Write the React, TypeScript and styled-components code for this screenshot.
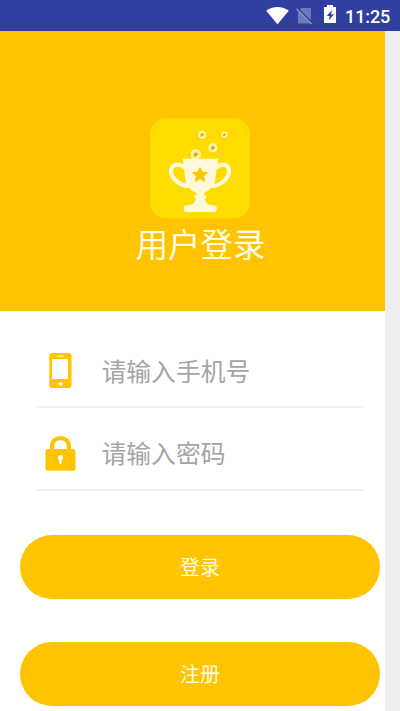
import React from "react";
import styled, { createGlobalStyle } from "styled-components";

const GlobalStyle = createGlobalStyle`
  * { box-sizing: border-box; }
  body {
    margin: 0;
    background: #ededed;
    font-family: Roboto, "Noto Sans CJK SC", sans-serif;
  }
`;

const Screen = styled.div`
  width: 400px;
  height: 711px;
  overflow: hidden;
  background: #ededed;
`;

const StatusBar = styled.header`
  height: 31px;
  background: #303f9f;
  color: #fff;
  display: flex;
  justify-content: flex-end;
  svg { display: block; flex: none; }
`;

const Clock = styled.time`
  width: 55px;
  padding: 6px 0 0;
  font-size: 18px;
  line-height: 22px;
  font-weight: 500;
  letter-spacing: -0.1px;
`;

const Page = styled.main`
  width: 385px;
  height: 680px;
  background: #fff;
`;

const Banner = styled.section`
  height: 280px;
  padding: 87px 0 0 15px;
  background: #ffc300;
  display: flex;
  flex-direction: column;
  align-items: center;
  svg { display: block; flex: none; }
`;

const Title = styled.h1`
  margin: 3px 0 0 1px;
  font-size: 32.4px;
  line-height: 48px;
  font-weight: 400;
  color: #fffde4;
`;

const Form = styled.form`
  display: flex;
  flex-direction: column;
  padding-top: 15px;
`;

const Field = styled.label`
  width: 326px;
  height: 82.3px;
  margin-left: 37px;
  border-bottom: 2px solid #f0f0f0;
  display: flex;
  align-items: center;
  flex: none;
  svg { display: block; flex: none; margin: 7px 24.5px 0 7px; }
`;

const Input = styled.input`
  width: 250px;
  height: 40px;
  margin-top: 8px;
  padding: 0;
  border: 0;
  outline: 0;
  background: transparent;
  font: 400 24.8px/40px "Noto Sans CJK SC", sans-serif;
  color: #555;
  &::placeholder { color: #a5a5a5; opacity: 1; }
`;

const Actions = styled.div`
  display: flex;
  flex-direction: column;
  gap: 43.5px;
  padding: 44px 0 0 20px;
`;

const Button = styled.button`
  width: 360px;
  height: 64px;
  padding: 0;
  border: 0;
  border-radius: 32px;
  background: #ffc300;
  color: #fffde4;
  font: 400 20px/64px "Noto Sans CJK SC", sans-serif;
`;

const StatusIcons = () => (
  <svg width="80" height="31" viewBox="0 0 80 31">
    <path d="M1.2 10.8C7 5.7 18 5.7 23.8 10.8L12.5 24.2Z" fill="#fff" />
    <path d="M36.5 8H46V23.5H33V11.5Z" fill="#6d79bc" />
    <path d="M32.5 8.2L48 23.2" stroke="#303f9f" strokeWidth="1.5" />
    <path d="M31.4 8.8L46.8 24.1" stroke="#8992c8" strokeWidth="1.3" />
    <path d="M59 7H62V5H68V7H71V23H59Z" fill="#fff" />
    <path d="M67 10L61.8 16H64.7L63.5 20.5L69 14.2H66Z" fill="#303f9f" />
  </svg>
);

type CoinProps = { x: number; y: number; r: number };

const Coin = ({ x, y, r }: CoinProps) => (
  <g transform={`translate(${x} ${y}) scale(${r / 5})`}>
    <circle r="5.3" cx="-0.3" cy="0.5" fill="#ffc91d" />
    <circle r="5" fill="#fff47d" />
    <circle r="3.7" fill="#fff7ad" />
    <path d="M0.8-3.2L1-0.8L3-0.5L1.2 0.8L0.3 2.5L-0.7 1.5L-2.4 2.9L-1.6 0.3L-2.5-1L-0.7-1Z" fill="#d9a51b" />
  </g>
);

const Trophy = () => (
  <svg width="100" height="101" viewBox="150 118 100 101">
    <rect x="150" y="118.5" width="100" height="100" rx="16" fill="#ffdc00" />
    <Coin x={202.2} y={134.8} r={4.3} />
    <Coin x={224.3} y={134.7} r={3.3} />
    <Coin x={212.9} y={147.8} r={4.8} />
    <Coin x={195.7} y={154.4} r={5.5} />
    <g fill="none" stroke="#fff9dc" strokeWidth="4.2" strokeLinecap="round">
      <path d="M184 167C179 162.5 171 164.5 171 171C171 179 181 186 188.5 186" />
      <path d="M217 167C222 162.5 229 164.5 229 171C229 179 219.5 186 212 186" />
    </g>
    <path d="M182.8 158.7H218.2L215 181C213.5 187 208 190.7 204.2 193.2V195.2H206V198.7H204.3L206 202.3C207.8 204.3 210 205.3 213.5 205.3A3.3 3.3 0 0 1 213.5 212H187A3.3 3.3 0 0 1 187 205.3C191 205.3 193 204.2 194.5 202.3L196.2 198.7H194.5V195.2H196.5V193.2C192 190.7 187 187.5 185.5 181Z" fill="#fff9dc" />
    <path d="M200 166.5L202.5 171.6L208.4 172.2L204.2 176.2L205.3 182L200 179.2L194.7 182L195.8 176.2L191.6 172.2L197.5 171.6Z" fill="#f8c900" />
  </svg>
);

const PhoneIcon = () => (
  <svg width="33" height="38" viewBox="44 351 33 38">
    <rect x="49.3" y="353" width="22.2" height="35" rx="3" fill="#ffc300" />
    <path d="M52 359H68V379H52Z" fill="#fff" />
    <path d="M57.3 356.2H63.6" stroke="#fff0b8" strokeWidth="1.2" strokeLinecap="round" />
    <path d="M58.3 382.7L60.5 382L62.7 382.7V384.2L60.5 386L58.3 384.2Z" fill="#fffbe5" />
  </svg>
);

const LockIcon = () => (
  <svg width="33" height="38" viewBox="44 433.3 33 38">
    <path d="M52 450V447C52 435.4 69 435.4 69 447V450" fill="none" stroke="#ffc300" strokeWidth="4.2" />
    <rect x="45.5" y="449.3" width="30" height="21.7" rx="2.5" fill="#ffc300" />
    <path d="M60.5 455.3A2.5 2.5 0 0 0 59.2 460L59.6 464.3H61.4L61.8 460A2.5 2.5 0 0 0 60.5 455.3Z" fill="#fff" />
  </svg>
);

export default function App() {
  return (
    <Screen>
      <GlobalStyle />
      <StatusBar>
        <StatusIcons />
        <Clock>11:25</Clock>
      </StatusBar>
      <Page>
        <Banner>
          <Trophy />
          <Title>用户登录</Title>
        </Banner>
        <Form>
          <Field>
            <PhoneIcon />
            <Input type="tel" placeholder="请输入手机号" />
          </Field>
          <Field>
            <LockIcon />
            <Input type="password" placeholder="请输入密码" />
          </Field>
          <Actions>
            <Button type="button">登录</Button>
            <Button type="button">注册</Button>
          </Actions>
        </Form>
      </Page>
    </Screen>
  );
}
